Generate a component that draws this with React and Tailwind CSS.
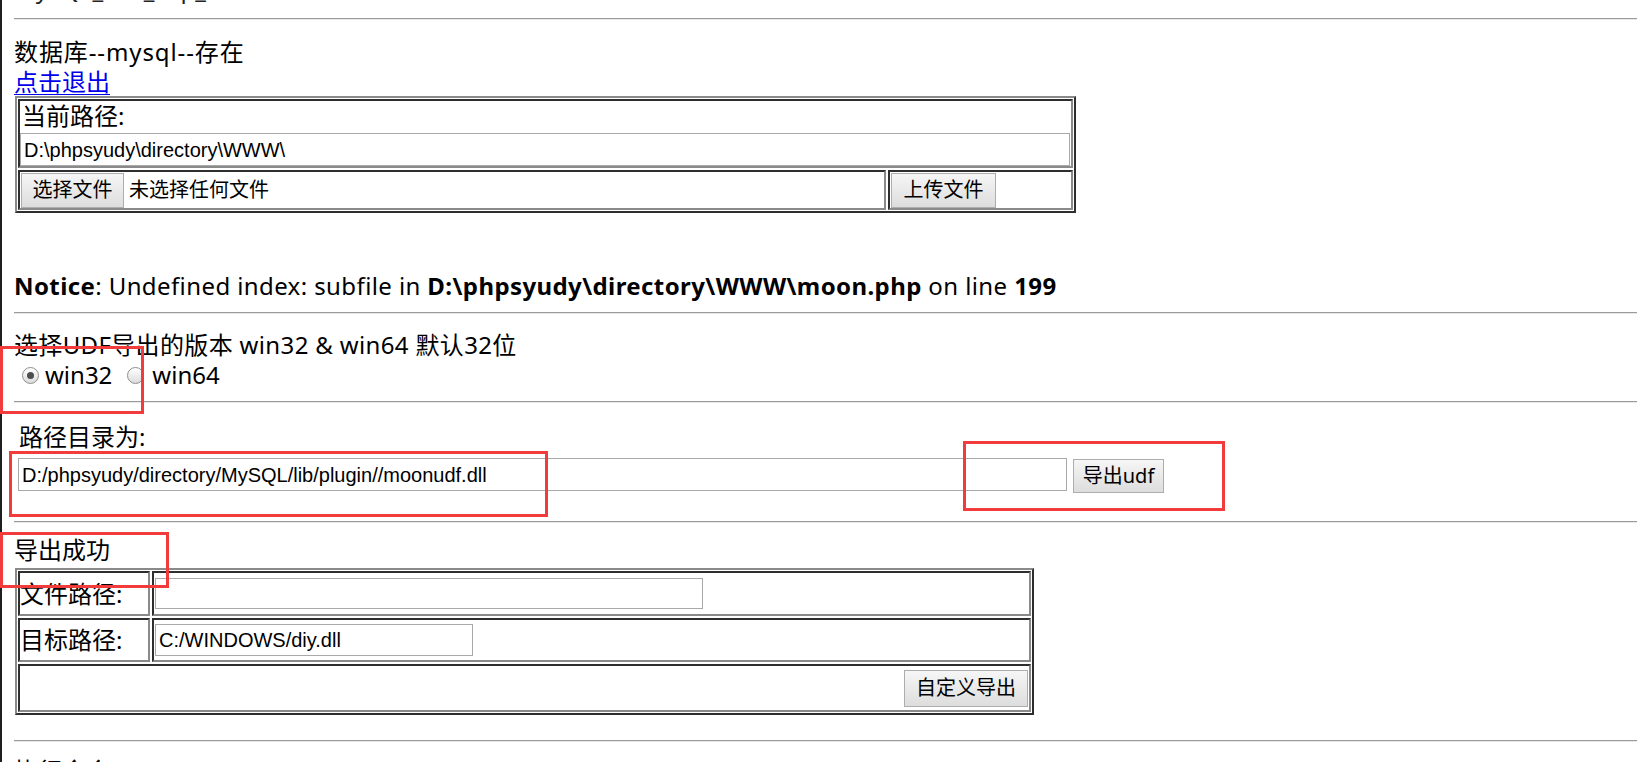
import React from "react";

const MAIN = "font-['Noto_Sans','Noto_Sans_CJK_SC',sans-serif]";
const INPUT_FONT = "font-['Liberation_Sans','Noto_Sans_CJK_SC',sans-serif]";

function Btn({ children, className = "" }) {
  return (
    <div
      className={`flex items-center justify-center border border-[#adadad] bg-gradient-to-b from-[#f6f6f6] to-[#dddddd] text-[20px] leading-none text-black ${MAIN} ${className}`}
    >
      {children}
    </div>
  );
}

function Input({ value = "", className = "" }) {
  return (
    <div
      className={`flex items-center border border-[#a9a9a9] bg-white pl-[3px] text-[20px] leading-none text-black whitespace-nowrap overflow-hidden ${INPUT_FONT} ${className}`}
    >
      {value}
    </div>
  );
}

function Hr({ className = "" }) {
  return <div className={`h-[2px] border-t border-t-[#9a9a9a] border-b border-b-[#e9e9e9] ${className}`} />;
}

function Radio({ checked }) {
  return (
    <div className="flex h-[17px] w-[17px] items-center justify-center rounded-full border border-[#8e8e8e] bg-gradient-to-b from-[#ffffff] to-[#dcdcdc]">
      {checked && <div className="h-[7px] w-[7px] rounded-full bg-[#4d4d4d]" />}
    </div>
  );
}

const tableOuter =
  "border-2 border-t-[#8a8a8a] border-l-[#8a8a8a] border-b-[#2e2e2e] border-r-[#2e2e2e] p-[1px] flex flex-col gap-[2px]";
const cell =
  "border-2 border-t-[#2e2e2e] border-l-[#2e2e2e] border-b-[#8a8a8a] border-r-[#8a8a8a]";

function RedBox({ className }) {
  return <div className={`absolute border-[3px] border-[#f23c3c] pointer-events-none ${className}`} />;
}

export default function App() {
  return (
    <div className={`relative flex h-[762px] w-[1637px] overflow-hidden bg-white text-black ${MAIN}`}>
      <div className="w-[2px] shrink-0 bg-[#1f1f1f]" />
      <div className="flex-1 pl-[12px] text-[24px]">
        {/* cut-off title */}
        <div className="h-[5px] overflow-hidden">
          <div className="-mt-[26px] whitespace-nowrap leading-[30px] text-[#222]">MySQL_Udf_Exp_Moon</div>
        </div>
        <Hr className="mt-[13px]" />

        <div className="mt-[17px] h-[30px] leading-[30px] whitespace-nowrap tracking-[0.9px]">数据库--mysql--存在</div>
        <div className="h-[29px] leading-[29px]">
          <a href="#" className="text-[#0000ee] underline decoration-1 underline-offset-[3px]">
            点击退出
          </a>
        </div>

        {/* table 1 */}
        <div className={`ml-[1px] w-[1061px] ${tableOuter}`}>
          <div className={`${cell} flex h-[69px] flex-col`}>
            <div className="h-[30px] pl-[2px] leading-[30px]">当前路径:</div>
            <Input className="mt-[2px] h-[33px] w-[1050px]" value={"D:\\phpsyudy\\directory\\WWW\\"} />
          </div>
          <div className="flex h-[40px] gap-[2px]">
            <div className={`${cell} flex w-[868px] items-center pl-[1px]`}>
              <Btn className="h-[35px] w-[103px]">选择文件</Btn>
              <span className="ml-[5px] text-[20px] leading-none">未选择任何文件</span>
            </div>
            <div className={`${cell} flex flex-1 items-center pl-[1px]`}>
              <Btn className="h-[35px] w-[105px]">上传文件</Btn>
            </div>
          </div>
        </div>

        {/* notice */}
        <div className="mt-[58px] h-[30px] whitespace-nowrap leading-[30px] tracking-[0.4px]">
          <b>Notice</b>: Undefined index: subfile in <b>{"D:\\phpsyudy\\directory\\WWW\\moon.php"}</b> on line{" "}
          <b>199</b>
        </div>
        <Hr className="mt-[11px]" />

        <div className="mt-[16px] h-[30px] whitespace-nowrap leading-[30px] tracking-[0.35px]">
          选择UDF导出的版本 win32 &amp; win64 默认32位
        </div>
        <div className="flex h-[30px] items-center">
          <div className="ml-[8px]">
            <Radio checked />
          </div>
          <span className="ml-[6px] leading-[30px]">win32</span>
          <div className="ml-[15px]">
            <Radio />
          </div>
          <span className="ml-[8px] leading-[30px]">win64</span>
        </div>
        <Hr className="mt-[11px]" />

        <div className="mt-[19px] h-[30px] pl-[5px] leading-[30px]">路径目录为:</div>
        <div className="mt-[6px] flex items-start">
          <Input
            className="ml-[4px] h-[33px] w-[1049px]"
            value="D:/phpsyudy/directory/MySQL/lib/plugin//moonudf.dll"
          />
          <Btn className="ml-[6px] mt-[1px] h-[34px] w-[91px]">导出udf</Btn>
        </div>
        <Hr className="mt-[28px]" />

        <div className="mt-[12px] h-[30px] leading-[30px]">导出成功</div>

        {/* table 2 */}
        <div className={`mt-[3px] ml-[1px] w-[1019px] ${tableOuter}`}>
          <div className="flex h-[45px] gap-[2px]">
            <div className={`${cell} flex w-[132px] items-center`}>文件路径:</div>
            <div className={`${cell} flex flex-1 items-center pl-[1px]`}>
              <Input className="h-[31px] w-[548px]" value="" />
            </div>
          </div>
          <div className="flex h-[44px] gap-[2px]">
            <div className={`${cell} flex w-[132px] items-center`}>目标路径:</div>
            <div className={`${cell} flex flex-1 items-center pl-[1px]`}>
              <Input className="h-[32px] w-[318px]" value="C:/WINDOWS/diy.dll" />
            </div>
          </div>
          <div className={`${cell} flex h-[48px] items-center justify-end pr-[1px]`}>
            <Btn className="h-[37px] w-[124px]">自定义导出</Btn>
          </div>
        </div>

        <Hr className="mt-[25px]" />
        <div className="mt-[14px] h-[30px] leading-[30px]">执行命令</div>
      </div>

      {/* red annotation boxes */}
      <RedBox className="left-0 top-[346px] h-[68px] w-[144px]" />
      <RedBox className="left-[9px] top-[451px] h-[66px] w-[539px]" />
      <RedBox className="left-[963px] top-[441px] h-[70px] w-[262px]" />
      <RedBox className="left-0 top-[532px] h-[56px] w-[169px]" />
    </div>
  );
}
